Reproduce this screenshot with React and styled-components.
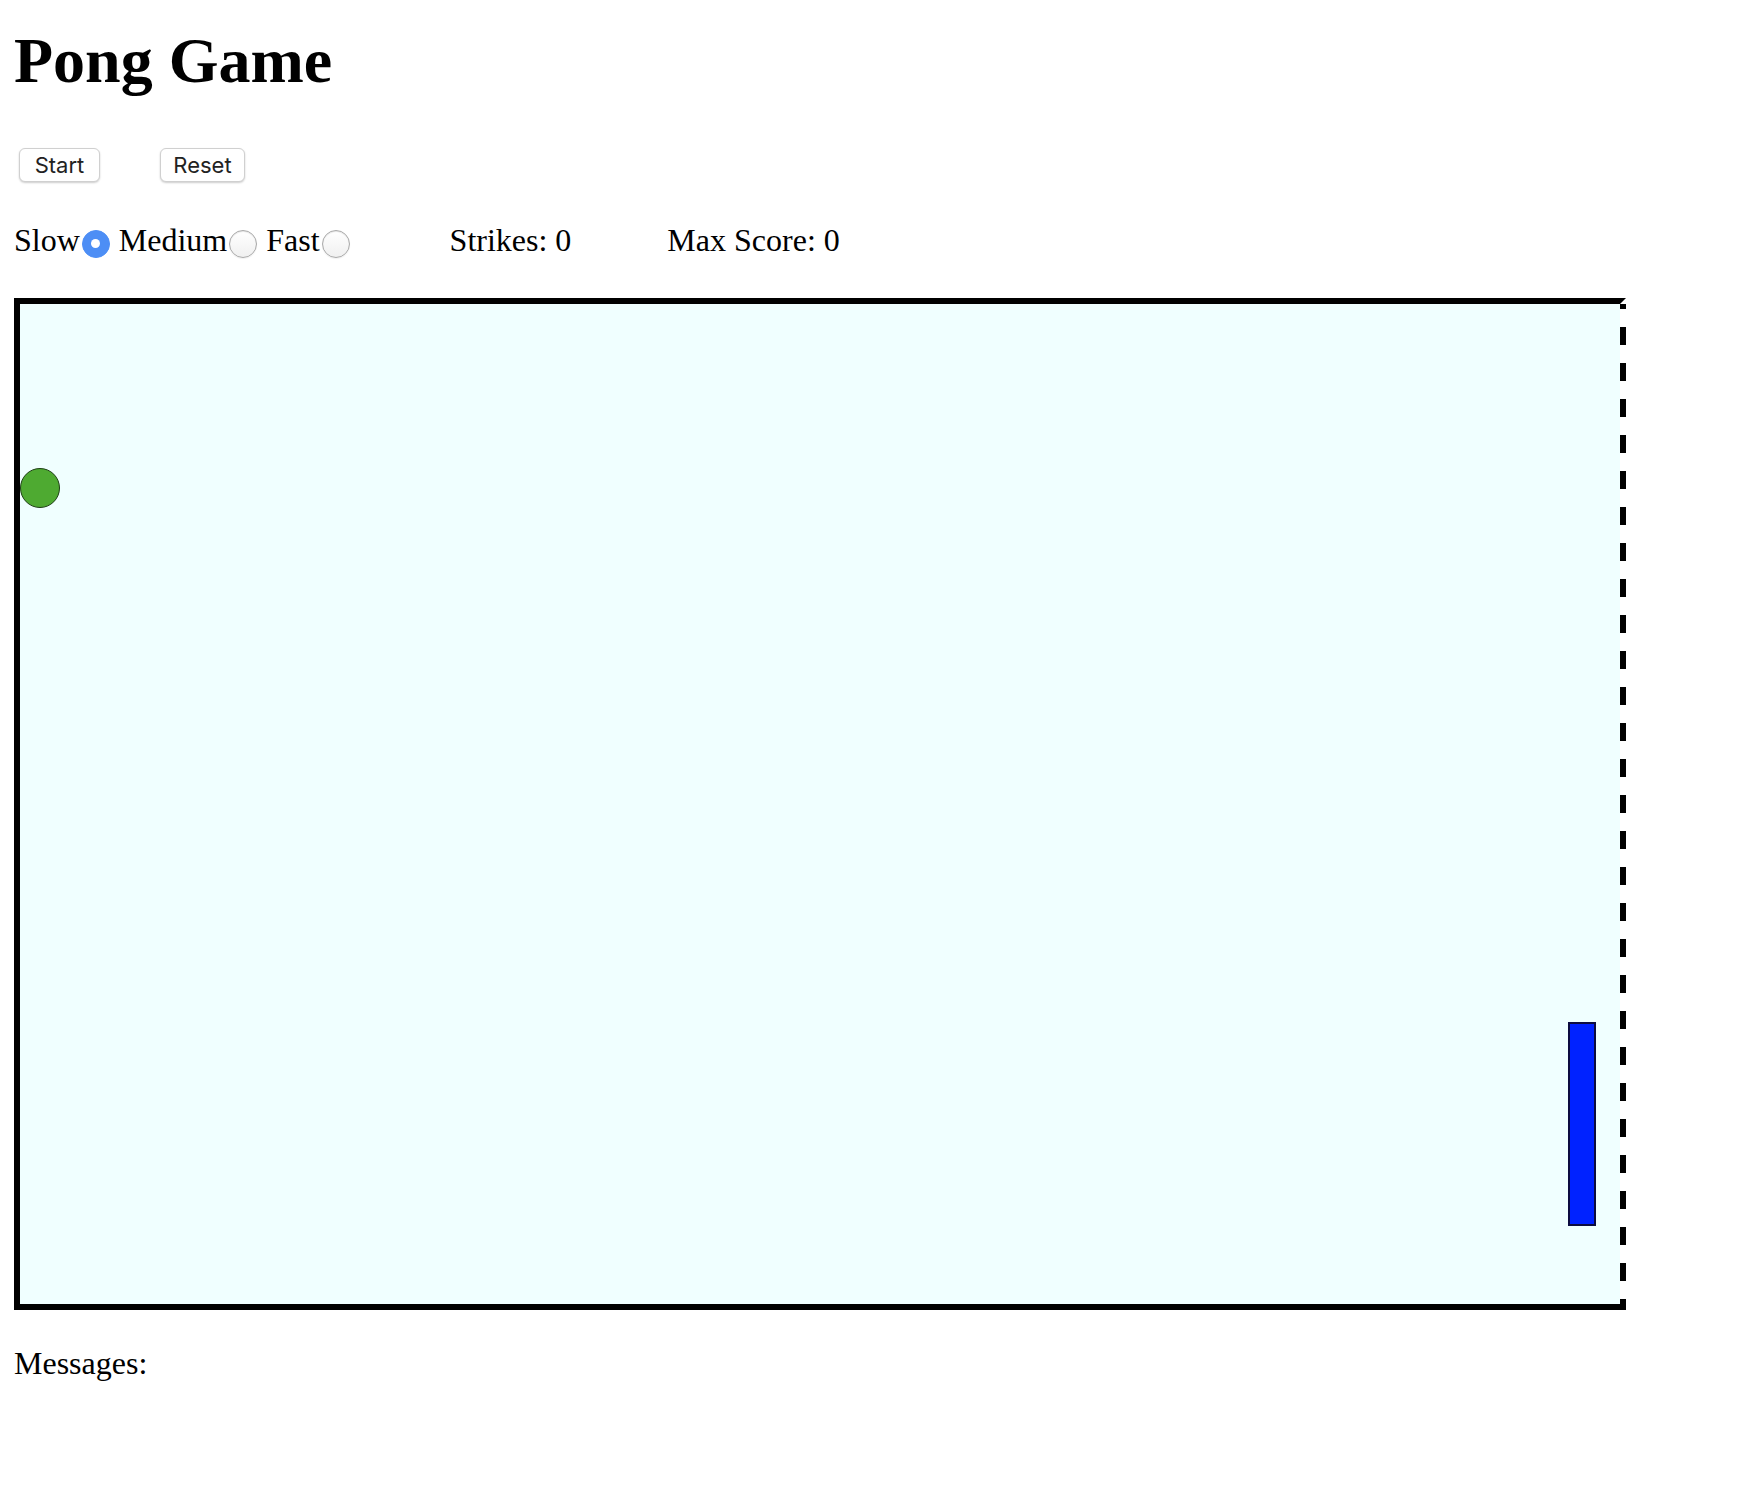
import React, { useState } from 'react';
import styled, { createGlobalStyle } from 'styled-components';

const GlobalStyle = createGlobalStyle`
	html, body {
		margin: 0;
		padding: 0;
		background: #ffffff;
	}
	body {
		font-family: 'Liberation Serif', 'Times New Roman', serif;
		color: #000000;
	}
`;

const speeds = ['Slow', 'Medium', 'Fast'];

export default function App() {
	const [speed, setSpeed] = useState('Slow');

	return (
		<React.Fragment>
			<GlobalStyle />
			<Page>
				<Title>Pong Game</Title>

				<ButtonRow>
					<Button $width={81}>Start</Button>
					<Button $width={85}>Reset</Button>
				</ButtonRow>

				<ControlRow>
					<SpeedGroup>
						{speeds.map(s => (
							<SpeedLabel key={s}>
								{s}
								<Radio
									type="radio"
									name="speed"
									checked={speed === s}
									onChange={() => setSpeed(s)}
								/>
							</SpeedLabel>
						))}
					</SpeedGroup>
					<Stat>Strikes: 0</Stat>
					<Stat>Max Score: 0</Stat>
				</ControlRow>

				<Board>
					<Ball />
					<Paddle />
				</Board>

				<Messages>Messages:</Messages>
			</Page>
		</React.Fragment>
	);
}

const Page = styled.div`
	padding: 24px 0 40px 14px;
	display: flex;
	flex-direction: column;
	align-items: flex-start;
`;

const Title = styled.h1`
	font-family: 'Liberation Serif', 'Times New Roman', serif;
	font-weight: 700;
	font-size: 64px;
	line-height: 74px;
	margin: 0;
`;

const ButtonRow = styled.div`
	display: flex;
	gap: 60px;
	margin-top: 50px;
	padding-left: 5px;
`;

const Button = styled.button`
	font-family: 'Inter', 'Liberation Sans', sans-serif;
	font-size: 22px;
	color: #222222;
	width: ${p => p.$width}px;
	height: 34px;
	padding: 0;
	background: #ffffff;
	border: 1px solid #d0d0d0;
	border-radius: 6px;
	box-shadow: 0 1px 2px rgba(0, 0, 0, 0.2);
	cursor: pointer;
`;

const ControlRow = styled.div`
	display: flex;
	align-items: center;
	gap: 96px;
	margin-top: 40px;
	font-size: 32px;
	line-height: 37px;
`;

const SpeedGroup = styled.div`
	display: flex;
	align-items: center;
`;

const SpeedLabel = styled.label`
	display: flex;
	align-items: center;
	margin-right: 9px;
	&:last-child {
		margin-right: 4px;
	}
`;

const Radio = styled.input`
	appearance: none;
	box-sizing: border-box;
	width: 28px;
	height: 28px;
	margin: 6px 0 0 2px;
	border-radius: 50%;
	border: 1px solid #a9a9a9;
	background: linear-gradient(#ffffff, #f0f0f0);
	box-shadow: inset 0 1px 1px rgba(0, 0, 0, 0.1), 0 1px 1px rgba(0, 0, 0, 0.06);
	display: grid;
	place-items: center;

	&:checked {
		border-color: #4d8ef5;
		background: #4d8ef5;
		box-shadow: none;
	}
	&:checked::after {
		content: '';
		width: 9px;
		height: 9px;
		border-radius: 50%;
		background: #ffffff;
	}
`;

const Stat = styled.span``;

const Board = styled.div`
	position: relative;
	width: 1600px;
	height: 1000px;
	margin-top: 39px;
	border: 6px solid #000000;
	border-right-color: transparent;
	background:
		repeating-linear-gradient(
			to bottom,
			#000000 0 11px,
			transparent 11px 29px,
			#000000 29px 36px
		) right top / 6px 100% no-repeat border-box,
		#f0ffff padding-box;
`;

const Ball = styled.div`
	position: absolute;
	left: 0;
	top: 164px;
	width: 40px;
	height: 40px;
	box-sizing: border-box;
	border-radius: 50%;
	background: #4eaa31;
	border: 1px solid #1f3f16;
`;

const Paddle = styled.div`
	position: absolute;
	left: 1548px;
	top: 718px;
	width: 28px;
	height: 204px;
	box-sizing: border-box;
	background: #0022ff;
	border: 2px solid #0c0c40;
`;

const Messages = styled.div`
	margin-top: 35px;
	font-size: 32px;
	line-height: 37px;
`;
